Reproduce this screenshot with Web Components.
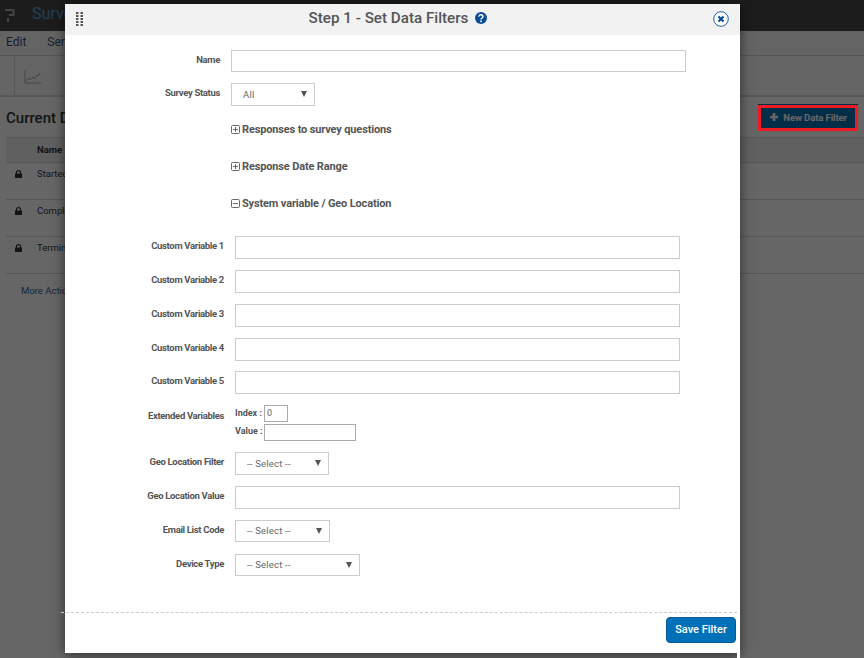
<!DOCTYPE html>
<html><head><meta charset="utf-8"><style>
html,body{margin:0;padding:0;height:100%;overflow:hidden;background:#fff;font-family:Roboto,"Liberation Sans",sans-serif;}
</style></head><body>
<x-app></x-app>
<x-overlay></x-overlay>
<x-marker></x-marker>
<x-modal>
  <x-field label="Name" lw="155" gap="11" top="15"><x-box w="455" h="22"></x-box></x-field>
  <x-field label="Survey Status" lw="155" gap="11" top="11"><x-pick w="84" h="23" val="All"></x-pick></x-field>
  <x-toggle top="16">Responses to survey questions</x-toggle>
  <x-toggle top="22">Response Date Range</x-toggle>
  <x-toggle top="22" open>System variable / Geo Location</x-toggle>
  <x-field label="Custom Variable 1" top="25"><x-box w="445" h="23"></x-box></x-field>
  <x-field label="Custom Variable 2" top="11"><x-box w="445" h="23"></x-box></x-field>
  <x-field label="Custom Variable 3" top="11"><x-box w="445" h="23"></x-box></x-field>
  <x-field label="Custom Variable 4" top="11"><x-box w="445" h="23"></x-box></x-field>
  <x-field label="Custom Variable 5" top="10"><x-box w="445" h="23"></x-box></x-field>
  <x-extended top="11"></x-extended>
  <x-field label="Geo Location Filter" top="11"><x-pick w="94" h="23" val="-- Select --"></x-pick></x-field>
  <x-field label="Geo Location Value" top="11"><x-box w="445" h="23"></x-box></x-field>
  <x-field label="Email List Code" top="11"><x-pick w="95" h="22" val="-- Select --"></x-pick></x-field>
  <x-field label="Device Type" top="12"><x-pick w="125" h="22" val="-- Select --"></x-pick></x-field>
</x-modal>
<script>
function def(name, css, html){
  customElements.define(name, class extends HTMLElement{
    constructor(){super();this.attachShadow({mode:'open'});}
    connectedCallback(){
      const a=n=>this.getAttribute(n);
      this.shadowRoot.innerHTML='<style>'+css(a,this)+'</style>'+html(a,this);
    }
  });
}
const FONT='Roboto,"Liberation Sans",sans-serif';

def('x-app',()=>`
:host{display:block;width:864px;height:658px;background:#fff;color:#333;font-family:${FONT};overflow:hidden}
.top{height:31px;background:#474747;display:flex;align-items:center;gap:17px;padding-left:5px;box-sizing:border-box}
.top span{font-size:16px;color:#5aa0d8;margin-top:-4px}
.menu{height:25px;box-sizing:border-box;border-bottom:1px solid #d8d8d8;background:#fafafa;display:flex;gap:21px;padding:4px 0 0 6px;font-size:12px;color:#33527a}
.tools{height:41px;box-sizing:border-box;border-bottom:2px solid #dcdcdc;background:#fafafa;padding-left:14px}
.tools div{height:39px;border-left:1px solid #ddd;padding:13px 0 0 9px;box-sizing:border-box}
.head{display:flex;justify-content:space-between;align-items:center;height:40px;padding:0 6px;box-sizing:border-box}
h2{margin:2px 0 0;font-size:15px;font-weight:500;color:#333}
.btn{width:100px;height:26px;box-sizing:border-box;background:#0b70b5;color:#fff;display:flex;align-items:center;justify-content:flex-end;gap:5px;padding-right:11px;font-size:9.500px;font-weight:700;letter-spacing:-.1px}
.th{height:26px;margin-left:6px;background:#efefef;border-top:1px solid #d8d8d8;border-bottom:1px solid #d8d8d8;box-sizing:border-box;padding:6px 0 0 31px;font-size:9.500px;font-weight:700}
.tr{height:37px;margin-left:6px;border-bottom:1px solid #d8d8d8;box-sizing:border-box;display:flex;align-items:flex-start;padding-top:5px;font-size:9.500px;gap:15px;padding-left:9px}
.tr svg{margin-top:2px}
.more{font-size:9.500px;color:#35609a;padding:11px 0 0 21px}
`,()=>{
 const lock='<svg width="7" height="8" viewBox="0 0 8 9"><path d="M1 4V3a3 3 0 0 1 6 0v1h1v5H0V4zM2.300 4h3.400V3a1.700 1.700 0 0 0-3.400 0z" fill="#333"/></svg>';
 return `<div class="top"><svg width="10" height="15" viewBox="0 0 10 15"><path d="M0 1h8.500a1 1 0 0 1 1 1v5a1 1 0 0 1-1 1H4V6h3.500V3H0zM2 10h2v4H2z" fill="#aaa"/></svg><span>Surveys</span></div>
 <div class="menu"><span>Edit</span><span>Send</span></div>
 <div class="tools"><div><svg width="17" height="14" viewBox="0 0 17 14" fill="none" stroke="#888" stroke-width=".7"><path d="M1 0v13h16M2 11l3-3 1 2 3-3 1 2 3-4 1 1 2-3"/></svg></div></div>
 <div class="head"><h2>Current Data Filters</h2><div class="btn"><svg width="8" height="8" viewBox="0 0 9 9"><path d="M3 0h3v3h3v3H6v3H3V6H0V3h3z" fill="#fff"/></svg><span>New Data Filter</span></div></div>
 <div class="th">Name</div>
 <div class="tr">${lock}<span>Started</span></div>
 <div class="tr">${lock}<span>Completed</span></div>
 <div class="tr">${lock}<span>Terminated</span></div>
 <div class="more">More Actions</div>`;
});

def('x-overlay',()=>`:host{display:block;position:absolute;inset:0;background:rgba(0,0,0,.6)}`,()=>'');
def('x-marker',()=>`:host{display:block;position:absolute;left:758px;top:105px;width:100px;height:26px;box-sizing:border-box;border:3px solid #ed1c24}`,()=>'');

def('x-modal',()=>`
:host{display:block;position:absolute;left:65px;top:4px;width:675px;height:649px;background:#fff;box-shadow:0 2px 12px rgba(0,0,0,.55);font-family:${FONT};color:#555}
.wrap{display:flex;flex-direction:column;height:100%}
header{height:31px;flex:none;background:#f2f2f2;display:flex;align-items:center;justify-content:space-between;padding:0 11px 0 11px;position:relative}
.title{position:absolute;left:0;right:9px;top:0;height:28px;display:flex;align-items:center;justify-content:center;gap:7px;font-size:15.200px;font-weight:500;color:#555}
header svg{position:relative}
main{flex:1}
.rule{position:absolute;left:-4px;right:3px;top:608px;border-top:1px dashed #ccc}
footer{height:41px;flex:none;display:flex;justify-content:flex-end;align-items:flex-start;padding:5px 4px 0 0;box-sizing:border-box}
button{width:70px;height:26px;border:1px solid #05599a;border-radius:4px;background:#0070b8;color:#fff;font:500 11px ${FONT};padding:0 0 1px}
.strip{position:absolute;left:672px;width:3px;top:649px;height:5px;background:#fff}
`,()=>`<div class="wrap"><header>
 <svg width="7" height="14" viewBox="0 0 7 14" fill="#555" style="top:-1px"><rect x="0" y="0" width="2.500" height="2"/><rect x="4.500" y="0" width="2.500" height="2"/><rect x="0" y="3" width="2.500" height="2"/><rect x="4.500" y="3" width="2.500" height="2"/><rect x="0" y="6" width="2.500" height="2"/><rect x="4.500" y="6" width="2.500" height="2"/><rect x="0" y="9" width="2.500" height="2"/><rect x="4.500" y="9" width="2.500" height="2"/><rect x="0" y="12" width="2.500" height="2"/><rect x="4.500" y="12" width="2.500" height="2"/></svg>
 <div class="title"><span>Step 1 - Set Data Filters</span><svg width="12" height="12" viewBox="0 0 12 12"><circle cx="6" cy="6" r="6" fill="#0a4c95"/><path d="M4 4.600a2 1.800 0 1 1 3 1.500c-.7.400-1 .7-1 1.300" fill="none" stroke="#fff" stroke-width="1.500"/><rect x="5.200" y="8.500" width="1.600" height="1.600" fill="#fff"/></svg></div>
 <svg width="16" height="16" viewBox="0 0 16 16" style="top:-.500px"><circle cx="8" cy="8" r="7.300" fill="#fff" stroke="#1f5fae" stroke-width="1"/><path d="M5.500 5.500l5 5m0-5l-5 5" stroke="#0a4c95" stroke-width="2.200"/></svg>
 </header><main><slot></slot></main><footer><button>Save Filter</button></footer></div><div class="rule"></div><div class="strip"></div>`);

def('x-field',a=>`
:host{display:grid;grid-template-columns:${a('lw')||159}px auto;column-gap:${a('gap')||11}px;margin-top:${a('top')||0}px;align-items:start;justify-content:start}
label{font-size:9.500px;font-weight:700;color:#555;text-align:right;white-space:nowrap;line-height:13px;padding-top:3px;letter-spacing:-.33px}
`,a=>`<label>${a('label')}</label><slot></slot>`);

def('x-box',a=>`
:host{display:block;width:${a('w')}px;height:${a('h')}px;box-sizing:border-box;border:1px solid #ccc;background:#fff}
`,()=>'');

def('x-pick',a=>`
:host{display:flex;align-items:center;justify-content:space-between;width:${a('w')}px;height:${a('h')}px;box-sizing:border-box;border:1px solid #ccc;background:#fff;padding:0 7px 1px 11px;font-size:9.500px;color:#666;letter-spacing:.2px}
i{width:0;height:0;border-left:3px solid transparent;border-right:3px solid transparent;border-top:6px solid #555}
`,a=>`<span>${a('val')}</span><i></i>`);

def('x-toggle',a=>`
:host{display:flex;align-items:center;gap:2px;height:15px;margin:${a('top')}px 0 0 166px;font-size:11px;font-weight:700;color:#555;letter-spacing:-.15px}
`,(a,e)=>`<svg width="9" height="9" viewBox="0 0 9 9" fill="none" stroke="#667"><rect x=".5" y=".5" width="8" height="8" rx="1"/><path d="M2 4.500h5${e.hasAttribute('open')?'':'M4.500 2v5'}"/></svg><slot></slot>`);

def('x-extended',a=>`
:host{display:grid;grid-template-columns:159px auto;column-gap:11px;margin-top:${a('top')}px;justify-content:start}
label{font-size:9.500px;font-weight:700;text-align:right;color:#555;line-height:13px;padding-top:4px;white-space:nowrap;letter-spacing:-.33px}
.r{display:grid;grid-template-columns:29px auto;row-gap:2px;align-items:center;font-size:9px;font-weight:700;color:#555;white-space:nowrap}
.r span{padding-bottom:2px}
.r span+.b+span{padding-bottom:4px}
.b{box-sizing:border-box;border:1px solid #aaa;height:17px;font-weight:400;font-size:9px;padding-left:2px;line-height:14px;color:#666}
`,()=>`<label>Extended Variables</label><div class="r"><span>Index :</span><div class="b" style="width:24px">0</div><span>Value :</span><div class="b" style="width:92px"></div></div>`);
</script>
</body></html>
